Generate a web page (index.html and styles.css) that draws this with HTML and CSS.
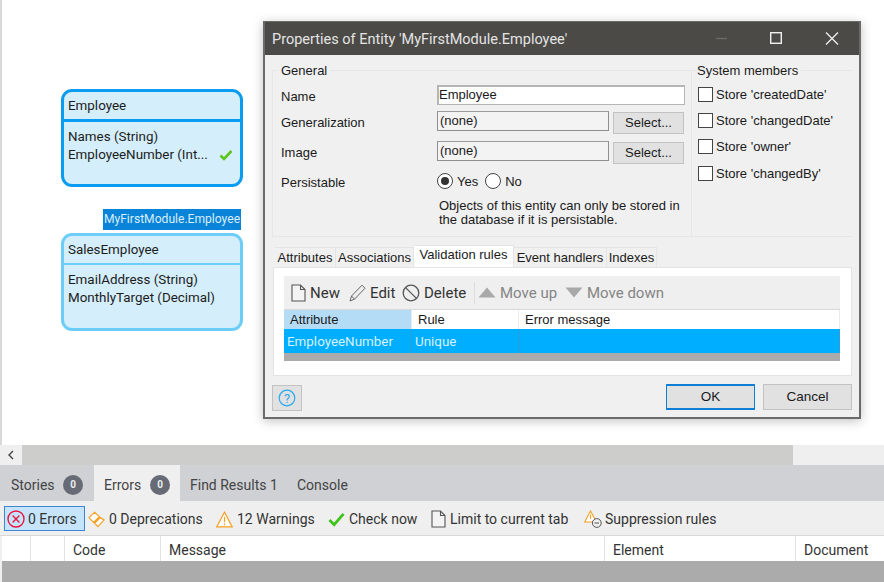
FILE: index.html
```html
<!DOCTYPE html>
<html lang="en">
<head>
    <meta charset="utf-8" />
    <title>Properties of Entity</title>
    <link rel="stylesheet" href="styles.css">
</head>
<body>
    <div id="canvas">
        <div class="entity selected node-employee">
            <div class="entityHead">Employee</div>
            <div class="entityBody">
                <div>Names (String)</div>
                <div class="attrRow"><span>EmployeeNumber (Int...</span>
                    <svg width="14" height="12" viewBox="0 0 14 12"><path d="M1.5 6.5 L5 10 L12.5 2" fill="none" stroke="#5cc41a" stroke-width="2.6"/></svg>
                </div>
            </div>
        </div>

        <div class="generalizes">MyFirstModule.Employee</div>

        <div class="entity node-sales">
            <div class="entityHead">SalesEmployee</div>
            <div class="entityBody">
                <div>EmailAddress (String)</div>
                <div>MonthlyTarget (Decimal)</div>
            </div>
        </div>

        <div id="dialog">
            <div class="titleBar">
                <span class="titleText">Properties of Entity 'MyFirstModule.Employee'</span>
                <svg class="winIcons" width="150" height="33" viewBox="0 0 150 33">
                    <path d="M7 16.5 H18" stroke="#6b6a67" stroke-width="1.4"/>
                    <rect x="61.7" y="10.7" width="10.6" height="10.6" fill="none" stroke="#f0f0f0" stroke-width="1.4"/>
                    <path d="M117 10.5 L129 22.5 M129 10.5 L117 22.5" stroke="#f0f0f0" stroke-width="1.3"/>
                </svg>
            </div>

            <div class="groups">
                <div class="group general">
                    <div class="legend">General</div>
                    <div class="formRow first">
                        <label>Name</label>
                        <div class="input wide">Employee</div>
                    </div>
                    <div class="formRow">
                        <label>Generalization</label>
                        <div class="input short">(none)</div>
                        <div class="btn select">Select...</div>
                    </div>
                    <div class="formRow">
                        <label>Image</label>
                        <div class="input short">(none)</div>
                        <div class="btn select">Select...</div>
                    </div>
                    <div class="formRow persist">
                        <label>Persistable</label>
                        <span class="radio on"></span><span class="radioText">Yes</span>
                        <span class="radio"></span><span class="radioText">No</span>
                    </div>
                    <p class="hint">Objects of this entity can only be stored in<br />the database if it is persistable.</p>
                </div>
                <div class="group system">
                    <div class="legend">System members</div>
                    <div class="checks">
                        <div class="check"><span class="box"></span>Store 'createdDate'</div>
                        <div class="check"><span class="box"></span>Store 'changedDate'</div>
                        <div class="check"><span class="box"></span>Store 'owner'</div>
                        <div class="check"><span class="box"></span>Store 'changedBy'</div>
                    </div>
                </div>
            </div>

            <div class="tabs">
                <span class="tab t1">Attributes</span>
                <span class="tab t2">Associations</span>
                <span class="tab t3 active">Validation rules</span>
                <span class="tab t4">Event handlers</span>
                <span class="tab t5">Indexes</span>
            </div>
            <div class="tabPanel">
                <div class="ruleTools">
                    <span class="tool">
                        <svg width="15" height="18" viewBox="0 0 15 18"><path d="M1 1 H9.5 L14 5.5 V17 H1 Z M9.5 1 V5.5 H14" fill="#f4f4f4" stroke="#555" stroke-width="1.1"/></svg>
                        New
                    </span>
                    <span class="tool">
                        <svg width="17" height="18" viewBox="0 0 17 18"><path d="M1 17 L2.5 12 L13 1.2 L16 4.2 L5.5 15.2 Z M2.5 12 L5.5 15.2" fill="none" stroke="#666" stroke-width="1"/></svg>
                        Edit
                    </span>
                    <span class="tool">
                        <svg width="18" height="18" viewBox="0 0 18 18"><circle cx="9" cy="9" r="7.8" fill="none" stroke="#555" stroke-width="1.3"/><path d="M3.6 3.6 L14.4 14.4" stroke="#555" stroke-width="1.3"/></svg>
                        Delete
                    </span>
                    <span class="toolSep"></span>
                    <span class="tool off">
                        <svg width="18" height="11" viewBox="0 0 18 11"><path d="M9 0.5 L17.5 10.5 H0.5 Z" fill="#a9a9a9"/></svg>
                        Move up
                    </span>
                    <span class="tool off">
                        <svg width="18" height="11" viewBox="0 0 18 11"><path d="M0.5 0.5 H17.5 L9 10.5 Z" fill="#a9a9a9"/></svg>
                        Move down
                    </span>
                </div>
                <div class="ruleHead">
                    <span class="colAttr sorted">Attribute</span>
                    <span class="colRule">Rule</span>
                    <span class="colMsg">Error message</span>
                </div>
                <div class="ruleRow">
                    <span class="colAttr">EmployeeNumber</span>
                    <span class="colRule">Unique</span>
                    <span class="colMsg"></span>
                </div>
                <div class="ruleFoot"></div>
            </div>

            <div class="dialogButtons">
                <div class="btn help">
                    <svg width="18" height="18" viewBox="0 0 18 18"><circle cx="9" cy="9" r="7.8" fill="none" stroke="#29a9ee" stroke-width="1.2"/><text x="9" y="13.5" text-anchor="middle" class="helpMark">?</text></svg>
                </div>
                <div class="spacer"></div>
                <div class="btn big ok">OK</div>
                <div class="btn big">Cancel</div>
            </div>
        </div>
    </div>

    <div id="scrollBar">
        <div class="scrollBtn">
            <svg width="8" height="10" viewBox="0 0 8 10"><path d="M6 1 L2 5 L6 9" fill="none" stroke="#444" stroke-width="1.4"/></svg>
        </div>
        <div class="scrollTrack"></div>
    </div>

    <div id="dockTabs">
        <span class="dockTab d1">Stories <b class="badge">0</b></span>
        <span class="dockTab d2 active">Errors <b class="badge">0</b></span>
        <span class="dockTab d3">Find Results 1</span>
        <span class="dockTab">Console</span>
    </div>

    <div id="errorTools">
        <span class="errTool pressed">
            <svg width="18" height="18" viewBox="0 0 18 18"><circle cx="9" cy="9" r="8" fill="none" stroke="#e8173f" stroke-width="1.4"/><path d="M5.6 5.6 L12.4 12.4 M12.4 5.6 L5.6 12.4" stroke="#e8173f" stroke-width="1.4"/></svg>
            0 Errors
        </span>
        <span class="errTool">
            <svg width="17" height="17" viewBox="0 0 18 18"><path d="M1 7 L7 1.5 L12 6 L6 12 Z M7 13 L13 7 L17 9.5 L10.5 16.5 Z" fill="#fff" stroke="#f5a023" stroke-width="1.3"/></svg>
            0 Deprecations
        </span>
        <span class="errTool">
            <svg width="17" height="17" viewBox="0 0 18 18"><path d="M9 1.2 L17.2 16.8 H0.8 Z" fill="#fff" stroke="#f5a023" stroke-width="1.2"/><path d="M9 6 V12 M9 13.2 V15" stroke="#f5a023" stroke-width="1.3"/></svg>
            12 Warnings
        </span>
        <span class="errTool">
            <svg width="17" height="15" viewBox="0 0 18 16"><path d="M1.5 8.5 L6.5 13.5 L16.5 2" fill="none" stroke="#3fc31b" stroke-width="3"/></svg>
            Check now
        </span>
        <span class="errTool">
            <svg width="15" height="18" viewBox="0 0 15 18"><path d="M1 1 H9.5 L14 5.5 V17 H1 Z M9.5 1 V5.5 H14" fill="#f4f4f4" stroke="#555" stroke-width="1.1"/></svg>
            Limit to current tab
        </span>
        <span class="errTool supp">
            <svg width="18" height="18" viewBox="0 0 18 18"><path d="M6.5 1 L12.5 12 H0.7 Z" fill="#fff" stroke="#f5a023" stroke-width="1.1"/><path d="M6.5 4.5 V9" stroke="#f5a023" stroke-width="1.1"/><circle cx="12.8" cy="13" r="4.4" fill="#efefef" stroke="#555" stroke-width="1"/><path d="M10.5 13 H15" stroke="#555" stroke-width="1"/></svg>
            Suppression rules
        </span>
    </div>

    <div id="errorHead">
        <span class="hCell c0"></span>
        <span class="hCell c1"></span>
        <span class="hCell c2">Code</span>
        <span class="hCell c3">Message</span>
        <span class="hCell c4">Element</span>
        <span class="hCell c5">Document</span>
    </div>
    <div id="errorEmpty"></div>
</body>
</html>
```

FILE: styles.css
```css
html, body {
    margin: 0px;
    padding: 0px;
}

body {
    width: 884px;
    height: 582px;
    overflow: hidden;
    display: flex;
    flex-direction: column;
    background-color: #efefef;
    font-family: Roboto, sans-serif;
    font-size: 14px;
    color: #222;
}

#canvas {
    position: relative;
    height: 445px;
    flex: none;
    border-left: 2px solid #d9d9d9;
    box-sizing: border-box;
    background-color: #fff;
}

/* entities on the domain model */

.entity {
    position: absolute;
    left: 59px;
    width: 182px;
    height: 98px;
    box-sizing: border-box;
    border: 3px solid #0a9cf0;
    border-radius: 11px;
    background-color: #d5eefb;
    font-size: 13.4px;
    line-height: 18px;
    color: #1c1c1c;
}

.node-employee {
    top: 89px;
}

.node-sales {
    top: 233px;
    border-color: #6ccdf8;
}

.entityHead {
    height: 30px;
    padding: 5px 0px 0px 4px;
    box-sizing: border-box;
    border-bottom: 3px solid #0a9cf0;
}

.node-sales .entityHead {
    border-bottom: 2px solid #6ccdf8;
    padding-top: 5px;
    height: 29px;
}

.entityBody {
    padding: 6px 0px 0px 4px;
    white-space: nowrap;
}

.attrRow {
    display: flex;
    align-items: center;
    justify-content: space-between;
    padding-right: 7px;
}

.generalizes {
    position: absolute;
    left: 101px;
    top: 209px;
    width: 138px;
    height: 21px;
    background-color: #0a84d8;
    color: #d8eefc;
    font-size: 12.1px;
    line-height: 21px;
    text-align: center;
    white-space: nowrap;
}

/* the dialog */

#dialog {
    position: absolute;
    left: 261px;
    top: 21px;
    width: 598px;
    height: 398px;
    box-sizing: border-box;
    border: 2px solid #6a6a6a;
    border-top-width: 1px;
    background-color: #f0f0f0;
    box-shadow: 0px 2px 10px rgba(0, 0, 0, 0.25);
    font-family: "Liberation Sans", sans-serif;
    font-size: 13px;
    color: #1a1a1a;
}

.titleBar {
    height: 33px;
    display: flex;
    align-items: center;
    justify-content: space-between;
    background-color: #4b4a47;
    padding-left: 7px;
}

.titleText {
    font-family: Roboto, sans-serif;
    font-size: 14.5px;
    color: #e4e4e4;
    padding-top: 2px;
}

.groups {
    display: flex;
    margin: 15px 0px 0px 7px;
    height: 167px;
}

.group {
    box-sizing: border-box;
    border-top: 1px solid #e6e6e6;
    border-bottom: 1px solid #e6e6e6;
}

.general {
    width: 420px;
    padding-left: 8px;
    border-left: 1px solid #e6e6e6;
    border-right: 1px solid #e6e6e6;
}

.system {
    width: 160px;
    padding-left: 6px;
}

.legend {
    width: fit-content;
    margin: -8px 0px -7px -3px;
    padding: 0px 3px;
    height: 15px;
    line-height: 15px;
    background-color: #f0f0f0;
}

.system .legend {
    margin-left: -1px;
    padding-left: 0px;
}

.formRow {
    display: flex;
    align-items: flex-start;
    height: 30px;
}

.formRow.first {
    height: 26px;
    margin-top: 14px;
}

.formRow label {
    width: 156px;
    flex: none;
    padding-top: 4px;
}

.input {
    height: 20px;
    box-sizing: border-box;
    border: 1px solid #8f8f8f;
    border-top-color: #9b9b9b;
    line-height: 17px;
    padding-left: 2px;
    background-color: #fff;
}

.input.wide {
    width: 248px;
    padding-left: 0px;
    border-width: 2px 1px 1px 2px;
    border-color: #b5b5b5;
    line-height: 16px;
}

.input.short {
    width: 172px;
    background-color: #f3f3f3;
}

.btn {
    box-sizing: border-box;
    background-color: #e1e1e1;
    border: 1px solid #c2c2c2;
    text-align: center;
}

.select {
    width: 71px;
    height: 22px;
    line-height: 20px;
    margin: 1px 0px 0px 4px;
}

.persist {
    height: 20px;
    align-items: center;
}

.persist label {
    padding-top: 2px;
}

.radio {
    width: 14px;
    height: 14px;
    border: 1px solid #444;
    border-radius: 50%;
    background-color: #fff;
    position: relative;
    flex: none;
}

.radio.on::after {
    content: "";
    position: absolute;
    left: 3px;
    top: 3px;
    width: 8px;
    height: 8px;
    border-radius: 50%;
    background-color: #333;
}

.radioText {
    margin: 0px 7px 0px 4px;
}

.hint {
    margin: 8px 0px 0px 158px;
    line-height: 14px;
    white-space: nowrap;
}

.checks {
    margin-top: 10px;
}

.check {
    display: flex;
    align-items: center;
    height: 26.3px;
    white-space: nowrap;
}

.box {
    width: 15px;
    height: 15px;
    box-sizing: border-box;
    border: 1px solid #444;
    background-color: #fff;
    margin-right: 3px;
    flex: none;
}

/* tabs inside the dialog */

.tabs {
    display: flex;
    align-items: flex-end;
    height: 30px;
    margin-left: 10px;
}

.tab {
    height: 20px;
    line-height: 20px;
    box-sizing: border-box;
    border: 1px solid #e4e4e4;
    border-bottom: 0px;
    border-left: 0px;
    white-space: nowrap;
    text-align: center;
}

.t1 { width: 61px; }
.t2 { width: 78px; }
.t3 { width: 100px; }
.t4 { width: 93px; }
.t5 { width: 50px; }

.tab.active {
    height: 22px;
    line-height: 18px;
    background-color: #fff;
}

.tabPanel {
    margin-left: 8px;
    width: 579px;
    height: 109px;
    box-sizing: border-box;
    padding: 8px 11px 0px 10px;
    background-color: #fff;
    border: 1px solid #e4e4e4;
}

.ruleTools {
    display: grid;
    grid-template-columns: 58px 53px 72px 4px 87px auto;
    align-items: center;
    height: 34px;
    background-color: #efefef;
    font-family: Roboto, sans-serif;
    font-size: 15px;
    padding-left: 7px;
    border-bottom: 1px solid #d8d8d8;
    box-sizing: border-box;
}

.tool {
    display: flex;
    align-items: center;
    gap: 4px;
    color: #333;
    white-space: nowrap;
}

.tool.off {
    color: #858585;
}

.toolSep {
    width: 1px;
    height: 22px;
    background-color: #dcdcdc;
}

.ruleHead, .ruleRow {
    display: flex;
    white-space: nowrap;
}

.ruleHead {
    height: 19px;
    line-height: 19px;
}

.ruleHead span {
    padding-left: 6px;
    box-sizing: border-box;
    border-right: 1px solid #ececec;
}

.colAttr { width: 128px; }
.colRule { width: 107px; }
.colMsg { flex: 1; }

.sorted {
    background-color: #b5dcf7;
}

.ruleRow {
    height: 24px;
    background-color: #00aeff;
    color: #d6f1ff;
    font-family: Roboto, sans-serif;
    font-size: 13.4px;
}

.ruleRow span {
    padding: 5px 0px 0px 3px;
    box-sizing: border-box;
    border-right: 1px solid #2a9fdc;
}

.ruleFoot {
    height: 8px;
    background-color: #ababab;
}

.dialogButtons {
    display: flex;
    align-items: flex-start;
    gap: 8px;
    margin: 8px 7px 0px 7px;
}

.spacer {
    flex: 1;
}

.help {
    width: 30px;
    height: 26px;
    margin-top: 1px;
    display: flex;
    align-items: center;
    justify-content: center;
}

.helpMark {
    font-family: Roboto, sans-serif;
    font-size: 13px;
    fill: #29a9ee;
}

.big {
    width: 89px;
    height: 26px;
    line-height: 24px;
    font-size: 13.5px;
}

.ok {
    border-color: #0f7fd6;
    border-width: 2px 1px 2px 1px;
    line-height: 22px;
}

/* bottom of the window */

#scrollBar {
    height: 20px;
    flex: none;
    display: flex;
    background-color: #efefef;
}

.scrollBtn {
    width: 22px;
    display: flex;
    align-items: center;
    justify-content: center;
}

.scrollTrack {
    width: 771px;
    background-color: #cdcdcb;
}

#dockTabs {
    height: 36px;
    flex: none;
    display: flex;
    padding-left: 1px;
    background-color: #cfd1d5;
    color: #444;
}

.dockTab {
    display: flex;
    align-items: center;
    padding: 4px 10px 0px 10px;
    white-space: nowrap;
    box-sizing: border-box;
}

.d1 { width: 93px; }
.d2 { width: 86px; }
.d3 { width: 107px; }

.dockTab.active {
    background-color: #efefef;
}

.badge {
    display: inline-block;
    width: 20px;
    height: 20px;
    margin-left: auto;
    border-radius: 50%;
    background-color: #666b75;
    color: #eee;
    font-size: 10px;
    line-height: 20px;
    text-align: center;
}

.d1 .badge {
    margin-right: 1px;
}

#errorTools {
    height: 35px;
    flex: none;
    display: grid;
    grid-template-columns: 84px 128px 112px 103px 153px auto;
    align-items: center;
    box-sizing: border-box;
    background-color: #efefef;
    border-bottom: 1px solid #d8d8d8;
    padding-left: 4px;
    color: #333;
}

.errTool {
    display: flex;
    align-items: center;
    gap: 4px;
    height: 25px;
    padding-top: 2px;
    box-sizing: border-box;
    white-space: nowrap;
}

.errTool.pressed {
    width: 81px;
    background-color: #c6e5fc;
    border: 1px solid #3d86d1;
    padding: 2px 3px 0px 2px;
    gap: 3px;
}

.errTool.supp {
    gap: 3px;
}

#errorHead {
    height: 25px;
    flex: none;
    display: flex;
    margin-left: 2px;
    line-height: 28px;
    background-color: #fff;
    color: #333;
}

.hCell {
    box-sizing: border-box;
    padding-left: 8px;
    border-right: 1px solid #e2e2e2;
}

.c0 { width: 29px; }
.c1 { width: 34px; }
.c2 { width: 96px; }
.c3 { width: 444px; }
.c4 { width: 191px; }
.c5 { flex: 1; border-right: 0px; }

#errorEmpty {
    flex: 1;
    margin-left: 2px;
    background-color: #ababab;
}
```
